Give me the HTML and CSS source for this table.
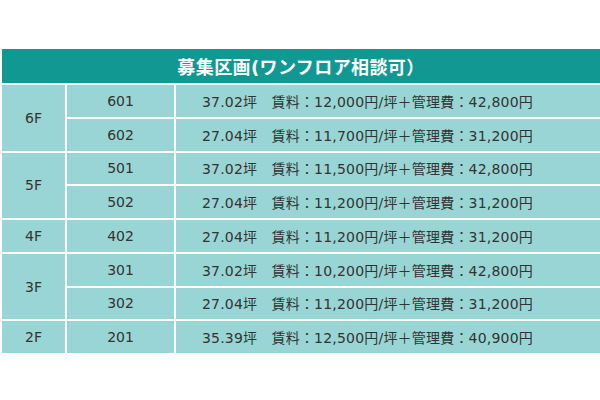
FILE: index.html
```html
<!DOCTYPE html>
<html lang="ja">
<head>
<meta charset="utf-8">
<link rel="stylesheet" href="styles.css">
</head>
<body>
<div class="sheet">
  <div class="grid">
    <div class="head">募集区画(ワンフロア相談可）</div>

    <div class="cell floor span2">6F</div>
    <div class="cell room">601</div>
    <div class="cell info">37.02坪　賃料：12,000円/坪＋管理費：42,800円</div>
    <div class="cell room">602</div>
    <div class="cell info">27.04坪　賃料：11,700円/坪＋管理費：31,200円</div>

    <div class="cell floor span2">5F</div>
    <div class="cell room">501</div>
    <div class="cell info">37.02坪　賃料：11,500円/坪＋管理費：42,800円</div>
    <div class="cell room">502</div>
    <div class="cell info">27.04坪　賃料：11,200円/坪＋管理費：31,200円</div>

    <div class="cell floor">4F</div>
    <div class="cell room">402</div>
    <div class="cell info">27.04坪　賃料：11,200円/坪＋管理費：31,200円</div>

    <div class="cell floor span2">3F</div>
    <div class="cell room">301</div>
    <div class="cell info">37.02坪　賃料：10,200円/坪＋管理費：42,800円</div>
    <div class="cell room">302</div>
    <div class="cell info">27.04坪　賃料：11,200円/坪＋管理費：31,200円</div>

    <div class="cell floor">2F</div>
    <div class="cell room">201</div>
    <div class="cell info">35.39坪　賃料：12,500円/坪＋管理費：40,900円</div>
  </div>
</div>
</body>
</html>
```

FILE: styles.css
```css
html, body {
  margin: 0;
  padding: 0;
  background: #ffffff;
  overflow: hidden;
}

.sheet {
  padding: 49px 0 0 2px;
  font-family: "DejaVu Sans", "Noto Sans CJK JP", sans-serif;
  color: #333333;
}

.grid {
  display: grid;
  grid-template-columns: 63px 107px 1fr;
  grid-template-rows: 34px repeat(8, 31.75px);
  gap: 2px;
  background: #ffffff;
}

.head {
  grid-column: 1 / 4;
  background: #119893;
  color: #ffffff;
  font-weight: bold;
  font-size: 18px;
  display: flex;
  align-items: center;
  justify-content: center;
  letter-spacing: 0.4px;
}

.cell {
  background: #98d5d4;
  font-size: 14px;
  display: flex;
  align-items: center;
}

.floor,
.room {
  justify-content: center;
}

.span2 {
  grid-row: span 2;
}

.info {
  padding-left: 26px;
  white-space: nowrap;
  letter-spacing: 0.2px;
}
```
